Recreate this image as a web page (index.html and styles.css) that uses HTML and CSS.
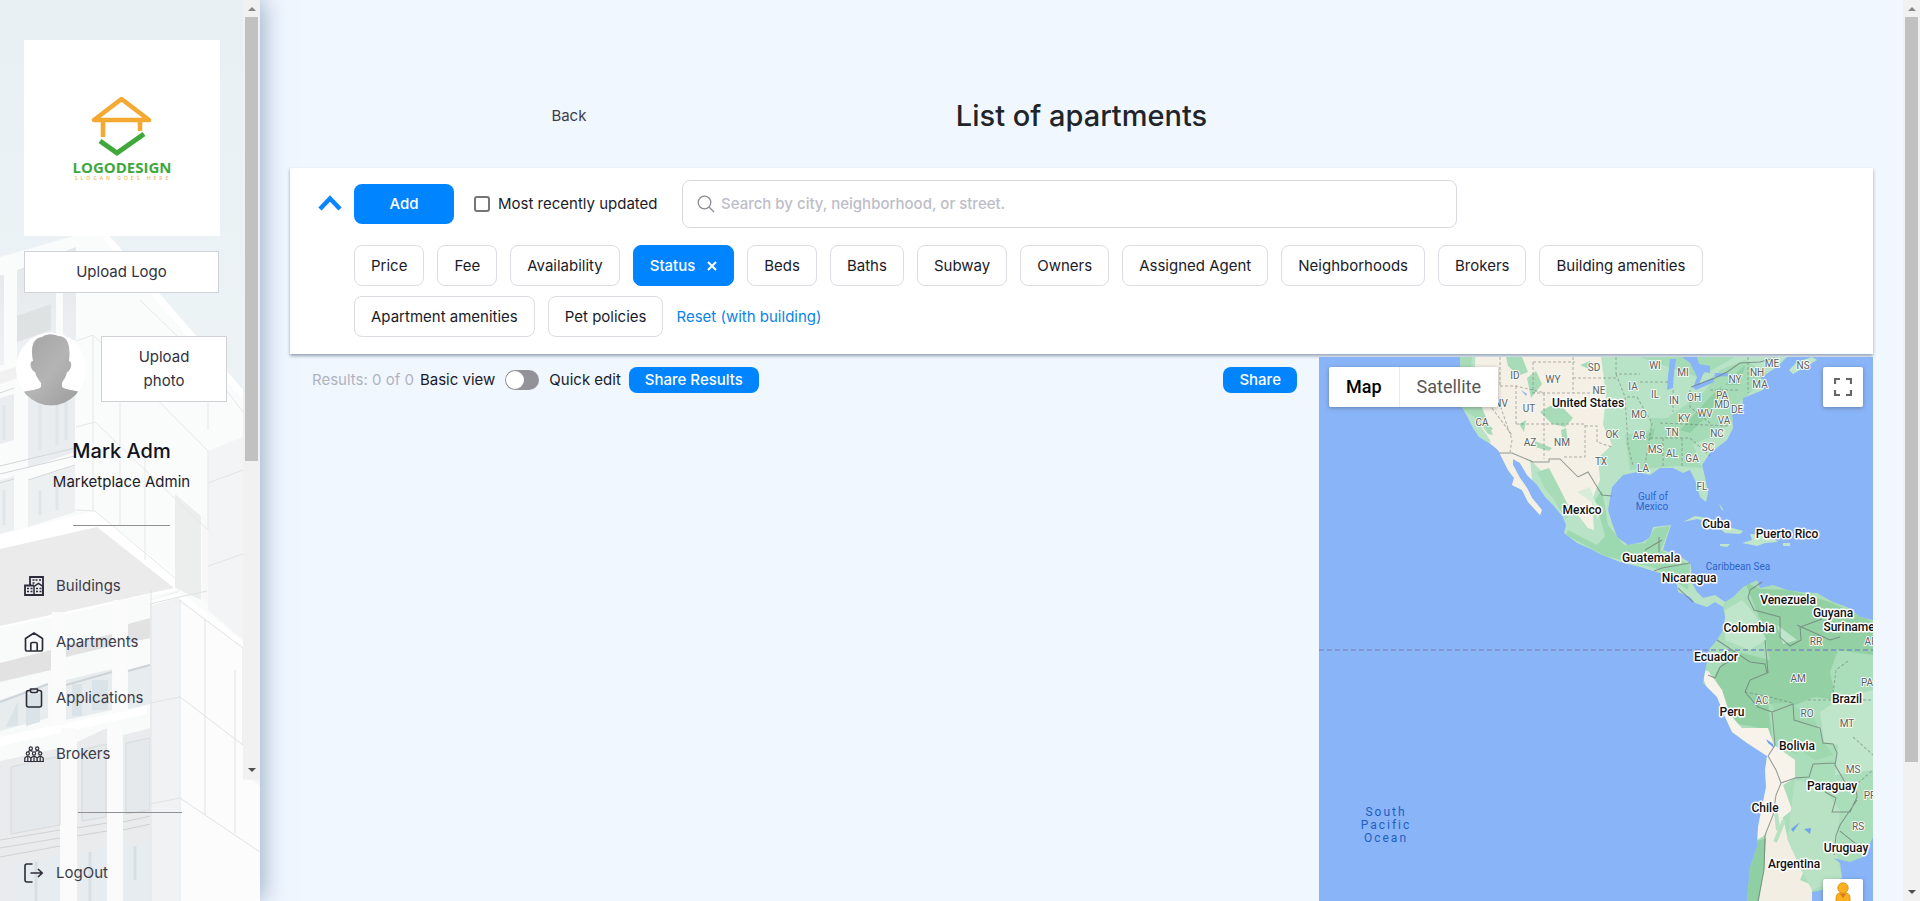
FILE: index.html
```html
<!DOCTYPE html>
<html lang="en">
<head>
<meta charset="utf-8">
<meta name="viewport" content="width=device-width, initial-scale=1">
<title>List of apartments</title>
<link rel="stylesheet" href="styles.css">
</head>
<body>
<div class="app">
  <aside class="sidebar">
    <svg class="sidebar-bg" viewBox="0 0 260 901" preserveAspectRatio="xMinYMin slice" aria-hidden="true">
      <defs>
        <linearGradient id="sky" x1="0" y1="0" x2="0" y2="1"><stop offset="0" stop-color="#e9f0f3"/><stop offset="1" stop-color="#f1f6f8"/></linearGradient>
        <linearGradient id="glass" x1="0" y1="0" x2="0" y2="1"><stop offset="0" stop-color="#e4e7e9"/><stop offset="1" stop-color="#eff3f5"/></linearGradient>
      </defs>
      <rect width="260" height="901" fill="url(#sky)"/>
      <path d="M0 257 74 236H105L243 395V901H0Z" fill="#fafbfb"/>
      <path d="M17 270 56 255V360L17 372ZM63 252 76 247V340H63ZM0 275H4V365H0Z" fill="url(#glass)"/>
      <path d="M17 316 51 304V330L17 342Z" fill="#dfe2e3"/>
      <path d="M0 372 76 347V358L0 384Z" fill="#f1f1f1"/>
      <path d="M0 398 14 394V440L0 444ZM28 384 75 367V452L28 468Z" fill="#e9edef"/>
      <path d="M0 480 14 476V530L0 534ZM28 480 75 466V512L28 527Z" fill="#edf0f1"/>
      <path d="M0 393 14 388M28 385 75 370M0 466 75 448M0 474 75 456M28 480 75 465M0 483 14 479" stroke="#d2d7d9" fill="none"/>
      <path d="M40 400V450M57 392V445M66 390V440M40 490V515M57 485V510M4 405V440M4 490V525" stroke="#dfe5e8" stroke-width="3"/>
      <path d="M0 535 95 511 175 575 179 590 0 628Z" fill="#fff"/>
      <path d="M0 549 97 527 174 588 0 626Z" fill="#ebebec"/>
      <path d="M175 494 201 516V600L175 588Z" fill="#eceded"/>
      <path d="M208 451 243 437V640L208 610Z" fill="#f3f4f5"/>
      <path d="M202 516 208 520V605L202 598Z" fill="#f8f8f9"/>
      <path d="M208 483 243 470M208 566 243 554" stroke="#e3e4e5"/>
      <path d="M76 341 93 335 208 451V530M76 427 95 422 208 530M76 510 95 511 175 578M93 335V510M120 360V525M140 300 208 366 243 412M208 366V430M145 450V560" fill="none" stroke="#e6e8e9"/>
      <path d="M105 236 243 395" stroke="#fff" stroke-width="7"/>
      <path d="M0 632 150 594V901H0Z" fill="#f9fafa"/>
      <path d="M0 663 51 650V670L0 682ZM66 645 112 634V646L66 657ZM128 624 150 618V638L128 643Z" fill="#e2e2e2"/>
      <path d="M0 700 48 684V718L0 731ZM66 680 112 669V710L66 720ZM128 670 150 664V704L128 709Z" fill="#e7ecee"/>
      <path d="M0 702 48 684M66 685 112 672M128 671 150 665" stroke="#cdd4d8" stroke-width="2"/>
      <path d="M6 727 18 701V725ZM26 694H40V722L26 726ZM72 684H82V716H72ZM92 680H108V710H92Z" fill="#d9e3e8"/>
      <path d="M0 737 147 706V714L0 746Z" fill="#fff"/>
      <path d="M0 761 60 748V901H0ZM77 742 107 728V901H77ZM123 735 151 728V901H123Z" fill="#eaebec"/>
      <path d="M11 767 60 756V825L11 834ZM82 750 106 744V817L82 821ZM126 743 150 738V810L126 814Z" fill="#e5e9eb" stroke="#d8dadb"/>
      <path d="M0 840 60 830M0 848 60 838M77 828 107 823M77 836 107 831M123 822 151 816M123 830 151 824M0 857 60 846" stroke="#cfd2d4"/>
      <path d="M14 865 60 856V901H14ZM80 852 107 847V901H80ZM124 845 151 840V901H124Z" fill="#e6ecef"/>
      <path d="M36 862V901M90 852V901M135 846V880" stroke="#d6dfe3" stroke-width="3"/>
      <path d="M61 728H76V901H61ZM108 722H122V901H108ZM52 612H65V725H52ZM113 600H127V712H113Z" fill="#fbfbfb"/>
      <path d="M150 600 179 590V901H150Z" fill="#f1f2f3"/>
      <path d="M179 590 243 640V780H253L260 786V901H179Z" fill="#fcfcfd"/>
      <path d="M150 603 179 595 243 645" fill="none" stroke="#fff" stroke-width="5"/>
      <path d="M150 604 179 597 207 591M179 600 243 648V745M150 703 180 697 243 745M150 804 180 798 260 852M205 620V815M235 670V833M180 600V901M151 590V901" fill="none" stroke="#e0e2e3"/>
    </svg>
    <div class="sidebar-scroll">
      <div class="sidebar-content">
        <div class="logo-card">
          <svg class="logo-mark" viewBox="0 0 110 90" aria-label="Logodesign, slogan goes here" role="img">
            <path d="M27 26 54.500 5 82 26ZM36 26V43M73 26V37" fill="none" stroke="#f3a932" stroke-width="4.600" stroke-linejoin="round"/>
            <path d="M33 47 50 59 77 40" fill="none" stroke="#40a83b" stroke-width="5"/>
            <text x="55" y="79" text-anchor="middle" class="logo-name">LOGODESIGN</text>
            <text x="56" y="86" text-anchor="middle" class="logo-slogan">SLOGAN GOES HERE</text>
          </svg>
        </div>
        <button class="upload upload-logo" type="button">Upload Logo</button>
        <div class="profile">
          <svg class="avatar" viewBox="0 0 70 74" role="img" aria-label="Profile photo">
            <defs><linearGradient id="grey" x1="0" y1="0" x2="1" y2="1"><stop offset="0" stop-color="#a2a2a2"/><stop offset=".5" stop-color="#b4b4b4"/><stop offset="1" stop-color="#9b9b9b"/></linearGradient>
            <clipPath id="round"><ellipse cx="35" cy="37" rx="35" ry="36.500"/></clipPath></defs>
            <ellipse cx="35" cy="37" rx="35" ry="36.500" fill="#fff"/>
            <path clip-path="url(#round)" d="M17 29C14 13 18 6 26 5 31 1 38 2 42 4 51 4 55 12 53 29 57 30 55 39 51 40 50 46 47 48 46 51V55C50 58 58 58 63 60L66 75H4L7 60C15 58 22 58 25 55V51C22 47 20 44 19 40 14 38 13 29 17 29Z" fill="url(#grey)"/>
          </svg>
          <button class="upload upload-photo" type="button">Upload photo</button>
        </div>
        <h2 class="user-name">Mark Adm</h2>
        <p class="user-role">Marketplace Admin</p>
        <hr class="rule">
        <nav class="nav" aria-label="Main">
          <a class="nav-link" href="#buildings">
            <svg viewBox="0 0 20 20" class="nav-icon" aria-hidden="true"><path d="M6 9V1H19V19H1V9.500H10" fill="none" stroke="currentColor" stroke-width="1.800"/><path d="M10 19V10.500L14.500 7.500 19 10.500V19Z" fill="none" stroke="currentColor" stroke-width="1.500"/><path d="M8.500 4H10.500M11.500 4H13.500M15 4H17M8.500 7H10.500M3 12.500H5M6.500 12.500H8.500M3 15.500H5M6.500 15.500H8.500M12 12.500H14M15.500 12.500H17.500M12 15.500H14M15.500 15.500H17.500" stroke="currentColor" stroke-width="1.500"/></svg>
            Buildings</a>
          <a class="nav-link" href="#apartments">
            <svg viewBox="0 0 20 20" class="nav-icon" aria-hidden="true"><path d="M1.500 6.500 10 1 18.500 6.500V17.500Q18.500 19 17 19H3Q1.500 19 1.500 17.500ZM6.800 19V12Q6.800 10.500 8.300 10.500H11.700Q13.200 10.500 13.200 12V19" fill="none" stroke="currentColor" stroke-width="1.700" stroke-linejoin="round"/></svg>
            Apartments</a>
          <a class="nav-link" href="#applications">
            <svg viewBox="0 0 20 20" class="nav-icon" aria-hidden="true"><path d="M6 2.500H4.500Q2.500 2.500 2.500 4.500V17Q2.500 19 4.500 19H15.500Q17.500 19 17.500 17V4.500Q17.500 2.500 15.500 2.500H14M6.500 1H13.500V3Q13.500 4.500 12 4.500H8Q6.500 4.500 6.500 3Z" fill="none" stroke="currentColor" stroke-width="1.600" stroke-linejoin="round"/></svg>
            Applications</a>
          <a class="nav-link" href="#brokers">
            <svg viewBox="0 0 20 20" class="nav-icon" aria-hidden="true"><g fill="none" stroke="currentColor" stroke-width="1.200"><circle cx="6.800" cy="4.500" r="1.600"/><circle cx="13.200" cy="4.500" r="1.600"/><circle cx="3.800" cy="9.500" r="1.600"/><circle cx="10" cy="9.500" r="1.600"/><circle cx="16.200" cy="9.500" r="1.600"/><path d="M4 7.500Q6.800 5.800 8.500 7.500M11.500 7.500Q13.200 5.800 16 7.500M.8 17.500V14Q3.800 10.500 6.800 14V17.500M7 17.500V14Q10 10.500 13 14V17.500M13.200 17.500V14Q16.200 10.500 19.200 14V17.500M3.800 12.500V17.500M10 12.500V17.500M16.200 12.500V17.500M0 17.500H20"/></g></svg>
            Brokers</a>
        </nav>
      </div>
      <div class="scrollbar" aria-hidden="true"><span class="arrow arrow-up"></span><span class="thumb thumb-side"></span><span class="arrow arrow-down"></span></div>
    </div>
    <div class="sidebar-footer">
      <hr class="rule rule-footer">
      <a class="nav-link" href="#logout">
        <svg viewBox="0 0 20 20" class="nav-icon" aria-hidden="true"><path d="M8.500 1H3Q1 1 1 3V17Q1 19 3 19H8.500M6.500 10H18M14 6 18.200 10 14 14" fill="none" stroke="currentColor" stroke-width="1.600"/></svg>
        LogOut</a>
    </div>
  </aside>

  <main class="main">
    <header class="page-header">
      <a class="back" href="#back">Back</a>
      <h1 class="title">List of apartments</h1>
    </header>

    <section class="filters" aria-label="Filters">
      <button class="collapse" type="button" aria-label="Collapse filters">
        <svg viewBox="0 0 24 16" aria-hidden="true"><path d="M2 14 12 3.500 22 14" fill="none" stroke="#0a84ff" stroke-width="4.500"/></svg>
      </button>
      <div class="filters-body">
        <div class="filters-top">
          <button class="primary add" type="button">Add</button>
          <label class="check"><input type="checkbox">Most recently updated</label>
          <label class="search">
            <svg viewBox="0 0 18 18" aria-hidden="true"><circle cx="7.500" cy="7.500" r="6.300" fill="none" stroke="#8b8b96" stroke-width="1.300"/><path d="M12 12 17 17" stroke="#8b8b96" stroke-width="1.300"/></svg>
            <input type="search" aria-label="Search apartments" placeholder="Search by city, neighborhood, or street.">
          </label>
        </div>
        <div class="chips">
          <button class="chip" type="button">Price</button>
          <button class="chip" type="button">Fee</button>
          <button class="chip" type="button">Availability</button>
          <button class="chip chip-active" type="button">Status <svg viewBox="0 0 10 10" aria-hidden="true"><path d="M1 1 9 9M9 1 1 9" stroke="#fff" stroke-width="2"/></svg></button>
          <button class="chip" type="button">Beds</button>
          <button class="chip" type="button">Baths</button>
          <button class="chip" type="button">Subway</button>
          <button class="chip" type="button">Owners</button>
          <button class="chip" type="button">Assigned Agent</button>
          <button class="chip" type="button">Neighborhoods</button>
          <button class="chip" type="button">Brokers</button>
          <button class="chip" type="button">Building amenities</button>
          <button class="chip" type="button">Apartment amenities</button>
          <button class="chip" type="button">Pet policies</button>
          <button class="reset" type="button">Reset (with building)</button>
        </div>
      </div>
    </section>

    <div class="results">
      <section class="list" aria-label="Results">
        <span class="count">Results: 0 of 0</span>
        <span class="view-label">Basic view</span>
        <input class="switch" id="quick" type="checkbox" role="switch">
        <label class="quick-label" for="quick">Quick edit</label>
        <button class="primary small" type="button">Share Results</button>
        <button class="primary small share" type="button">Share</button>
      </section>
      <section class="map" aria-label="Map">
        <svg class="map-canvas" viewBox="1319 357 554 544" preserveAspectRatio="xMaxYMin slice" role="img" aria-label="Map of the Americas">
          <defs>
            <clipPath id="land-n"><path d="M1460 357 1462 407 1468 418 1473 428 1479 437 1492 445 1498 450 1502 458 1508 470 1514 478 1512 485 1522 490 1528 502 1540 515 1542 510 1532 498 1527 488 1520 478 1513 465 1513 459 1520 463 1527 475 1537 485 1545 497 1553 505 1563 517 1566 525 1564 533 1577 543 1593 550 1600 554 1620 562 1640 567 1653 571 1667 575 1677 585 1678 592 1690 597 1695 603 1707 607 1715 602 1723 607 1725 602 1715 595 1703 598 1697 592 1692 583 1691 567 1690 563 1678 555 1663 550 1667 537 1671 525 1653 527 1650 537 1643 542 1628 545 1617 537 1612 523 1608 510 1612 487 1623 475 1637 472 1650 475 1660 468 1673 468 1683 473 1690 470 1695 480 1700 497 1706 502 1708 493 1705 477 1702 465 1710 453 1727 440 1733 428 1732 415 1742 408 1743 398 1763 390 1767 382 1760 378 1777 367 1783 361 1787 357Z"/></clipPath>
            <clipPath id="land-s"><path d="M1723 607 1725 617 1723 630 1717 640 1710 648 1708 655 1705 672 1703 683 1717 697 1725 717 1732 732 1747 743 1767 756 1765 770 1766 787 1762 807 1758 827 1757 847 1750 867 1747 901H1812V892L1822 890 1842 878 1840 863 1833 858 1850 862 1863 857 1873 837V620L1860 617 1847 607 1833 602 1817 593 1800 592 1787 590 1773 585 1760 588 1757 580 1743 587 1733 597 1725 602Z"/></clipPath>
          </defs>
          <rect x="1319" y="357" width="554" height="544" fill="#8ab4f8"/>
          <g clip-path="url(#land-n)">
            <rect x="1450" y="350" width="350" height="270" fill="#b9e3c6"/>
            <path d="M1476 350H1600L1606 395 1603 425 1612 445 1598 458 1600 480 1592 500 1594 530 1588 528 1570 505 1558 500 1545 475 1530 459 1532 480 1548 530H1500L1490 440 1480 425 1472 405Z" fill="#f5f0e6"/>
            <path d="M1473 350 1470 375 1478 398 1487 420 1493 435 1488 434 1478 420 1464 410 1455 370V350ZM1506 357H1522L1528 372 1518 376 1508 366ZM1527 378 1536 371 1542 384 1531 398ZM1540 412 1548 407 1558 403 1573 418 1565 427 1552 424ZM1535 441 1552 448 1549 451 1535 447ZM1561 430 1566 428 1568 441 1563 444ZM1537 472 1549 468 1560 489 1571 511 1566 520 1553 498 1545 489ZM1519 424 1526 420 1524 432ZM1487 423 1493 429 1488 432Z" fill="#a8dcb9"/>
            <path d="M1595 500 1602 490 1608 525 1624 545 1645 543 1655 528 1670 526 1661 550 1690 565 1688 590 1655 568 1605 556 1566 535 1568 530 1597 545 1605 536Z" fill="#9dd9b0"/>
            <path d="M1625 435 1650 430 1650 418 1667 418 1704 392 1720 370 1745 360 1770 375 1740 402 1732 422 1710 437 1693 444 1702 468 1675 466 1655 468 1630 470ZM1580 365 1590 361 1593 371ZM1640 357 1735 357 1712 370 1697 377Z" fill="#a5dbb6"/>
            <path d="M1680 430 1700 408 1712 395 1722 385 1716 402 1705 418 1690 433ZM1640 440 1655 428 1652 440ZM1725 385 1745 365 1740 385Z" fill="#90d0a4"/>
            <path d="M1591 498 1600 507 1598 520ZM1600 545 1612 552M1577 492 1590 487 1596 505" fill="#d7edda"/>
          </g>
          <g fill="#8ab4f8">
            <path d="M1670 359 1676 359 1674 372 1673 388 1667 390 1668 376ZM1682 357 1697 357 1699 364 1710 366 1710 373 1704 372 1699 384 1693 388 1697 377 1690 363ZM1692 387 1714 377 1714 382 1696 390ZM1715 373 1728 373 1728 376 1714 377ZM1521 390 1527 394 1526 396Z"/>
          </g>
          <g fill="#bfe6cb">
            <path d="M1789 370 1797 362 1812 357 1817 360 1800 370 1793 374ZM1683 522 1695 516 1707 518 1722 525 1743 531 1740 534 1725 533 1713 523 1697 519ZM1720 544 1730 544 1727 547 1720 546ZM1742 543 1752 540 1750 534 1770 535 1778 542 1765 543 1757 546ZM1783 543 1790 543 1790 546 1783 546ZM1719 503 1724 511 1721 509Z"/>
          </g>
          <g clip-path="url(#land-s)">
            <rect x="1700" y="575" width="175" height="330" fill="#aaddb9"/>
            <path d="M1745 582 1760 589 1790 590 1830 602 1873 622V655L1838 650 1830 672 1836 700 1815 697 1785 709 1768 703 1772 738 1756 727 1738 724 1722 700 1715 675 1730 650 1770 660 1762 625Z" fill="#93d1a5"/>
            <path d="M1725 610 1742 600 1755 615 1766 640 1750 650 1725 640ZM1777 625 1797 640 1783 644ZM1838 700 1873 690V770L1835 775 1838 745 1824 742 1820 712Z" fill="#bfe6cb"/>
            <path d="M1773 703H1790L1815 720 1822 740 1833 755 1815 760 1800 750 1796 755 1775 740Z" fill="#9fd7af"/>
            <path d="M1700 670 1708 671 1722 690 1730 715 1742 728 1768 728 1774 745 1795 760 1795 778 1783 785 1792 810 1782 818 1765 835 1757 840 1757 760 1722 728Z" fill="#f7f2ea"/>
            <path d="M1775 815 1783 818 1788 840 1800 854 1805 868 1800 880 1812 885V905H1758L1765 860 1763 842Z" fill="#f2eee3"/>
            <path d="M1795 780 1820 785 1840 810 1836 850 1842 878 1812 890 1800 868 1788 840 1790 815Z" fill="#b9e2c4"/>
            <path d="M1754 842 1766 838 1764 870 1758 905H1742Z" fill="#8fcfa3"/>
            <path d="M1776 813 1778 830M1784 820 1775 842M1789 838 1794 850M1800 865 1810 875" stroke="#b9e2c4" stroke-width="4"/>
          </g>
          <path d="M1766 739 1773 744 1774 748 1768 743ZM1791 829 1800 822 1793 832ZM1804 829 1811 828 1810 834Z" fill="#6fa3ee"/>
          <g fill="none" stroke="#6f7a76" stroke-width="1" opacity=".75">
            <path d="M1499 453 1512 453 1533 462H1549V459H1560L1578 477 1588 472 1602 495 1612 496M1645 550 1662 540M1659 537V552M1654 571 1662 568 1690 563M1678 588 1693 602M1762 582 1750 590 1748 598 1754 610 1780 617 1780 637 1790 646 1801 640 1800 627 1822 619M1797 625 1830 640 1840 637M1717 640 1735 652 1750 662 1765 664 1767 673 1750 680 1745 692 1758 707 1772 712 1793 704 1794 720 1820 728 1823 743 1833 744 1837 753 1835 765 1846 784 1855 782 1857 797 1850 812 1832 812 1836 798 1825 792M1708 675 1715 678 1720 667 1735 657M1765 640 1768 673M1772 712 1775 745 1768 756 1776 770 1781 783 1795 778 1809 777 1813 764 1835 763M1781 783 1776 795 1773 815 1765 835 1764 870 1758 901M1857 800 1840 825 1836 835 1834 855M1840 831 1861 848M1691 387 1715 378 1727 372 1740 363 1760 362 1775 358"/>
          </g>
          <g fill="none" stroke="#6f7a76" stroke-width="1" stroke-dasharray="3 2" opacity=".55">
            <path d="M1500 357V386M1516 386V424M1500 386H1516L1545 393M1533 362V393H1600M1533 362H1575M1573 357V393H1597M1573 378H1616M1544 393V459M1516 424H1585V457H1562M1499 402 1512 440 1510 452M1480 392 1512 435M1585 426H1597V442L1612 447M1616 357V374H1640M1616 374 1625 397 1628 445 1633 466M1627 397H1637L1652 423 1645 465M1640 382H1668M1673 390V412M1660 423 1730 426M1650 438H1690L1710 456M1663 438V466M1682 438V466M1690 390V407L1710 423M1710 390H1740M1748 357V393M1745 692 1770 697 1793 703M1833 693 1836 670 1848 661M1808 700H1873M1853 737 1873 755M1858 783 1873 770"/>
          </g>
          <path d="M1319 650H1873" stroke="#7f8dc4" stroke-width="1.500" stroke-dasharray="5 3"/>
          <g class="state">
            <text x="1515" y="379">ID</text><text x="1553" y="383">WY</text><text x="1594" y="371">SD</text><text x="1599" y="394">NE</text><text x="1501" y="407">NV</text><text x="1529" y="412">UT</text><text x="1482" y="426">CA</text><text x="1530" y="446">AZ</text><text x="1562" y="446">NM</text><text x="1601" y="465">TX</text><text x="1612" y="438">OK</text><text x="1655" y="369">WI</text><text x="1683" y="376">MI</text><text x="1633" y="390">IA</text><text x="1655" y="398">IL</text><text x="1674" y="404">IN</text><text x="1694" y="401">OH</text><text x="1735" y="383">NY</text><text x="1772" y="367">ME</text><text x="1757" y="376">NH</text><text x="1760" y="388">MA</text><text x="1803" y="369">NS</text><text x="1722" y="399">PA</text><text x="1722" y="408">MD</text><text x="1737" y="413">DE</text><text x="1639" y="418">MO</text><text x="1684" y="422">KY</text><text x="1705" y="417">WV</text><text x="1724" y="424">VA</text><text x="1639" y="439">AR</text><text x="1672" y="436">TN</text><text x="1717" y="437">NC</text><text x="1655" y="453">MS</text><text x="1672" y="457">AL</text><text x="1692" y="462">GA</text><text x="1708" y="451">SC</text><text x="1643" y="472">LA</text><text x="1702" y="490">FL</text><text x="1816" y="645">RR</text><text x="1871" y="645">AP</text><text x="1798" y="682">AM</text><text x="1867" y="686">PA</text><text x="1762" y="704">AC</text><text x="1807" y="717">RO</text><text x="1847" y="727">MT</text><text x="1853" y="773">MS</text><text x="1870" y="799">PR</text><text x="1858" y="830">RS</text>
          </g>
          <g class="water">
            <text x="1653" y="500">Gulf of</text><text x="1652" y="510">Mexico</text><text x="1738" y="570">Caribbean Sea</text>
          </g>
          <g class="ocean"><text x="1386" y="816">South</text><text x="1386" y="829">Pacific</text><text x="1386" y="842">Ocean</text></g>
          <g class="country">
            <text x="1588" y="407">United States</text><text x="1582" y="514">Mexico</text><text x="1716" y="528">Cuba</text><text x="1787" y="538">Puerto Rico</text><text x="1651" y="562">Guatemala</text><text x="1689" y="582">Nicaragua</text><text x="1788" y="604">Venezuela</text><text x="1833" y="617">Guyana</text><text x="1849" y="631">Suriname</text><text x="1749" y="632">Colombia</text><text x="1716" y="661">Ecuador</text><text x="1847" y="703">Brazil</text><text x="1732" y="716">Peru</text><text x="1797" y="750">Bolivia</text><text x="1832" y="790">Paraguay</text><text x="1765" y="812">Chile</text><text x="1846" y="852">Uruguay</text><text x="1794" y="868">Argentina</text>
          </g>
        </svg>
        <div class="map-types"><button type="button" class="map-type map-type-on">Map</button><button type="button" class="map-type">Satellite</button></div>
        <button class="map-button fullscreen" type="button" aria-label="Toggle fullscreen view"><svg viewBox="0 0 18 18" aria-hidden="true"><path d="M1 6V1H6M12 1H17V6M17 12V17H12M6 17H1V12" fill="none" stroke="#666" stroke-width="2.200"/></svg></button>
        <button class="map-button pegman" type="button" aria-label="Street View"><svg viewBox="0 0 16 34" aria-hidden="true"><path d="M4 11H12Q15 12 15 16V22H13L12 33H4L3 22H1V16Q1 12 4 11Z" fill="#fbb01d" stroke="#d58a12" stroke-width=".8"/><path d="M5 12 8 16 11 12Z" fill="#d9781c"/><circle cx="8" cy="6" r="5.200" fill="#fbb01d" stroke="#d58a12" stroke-width=".8"/></svg></button>
      </section>
    </div>
  </main>
  <div class="scrollbar" aria-hidden="true"><span class="arrow arrow-up"></span><span class="thumb thumb-page"></span><span class="arrow arrow-down"></span></div>
</div>
</body>
</html>
```
FILE: styles.css
```css
*{box-sizing:border-box}
body{margin:0;background:#f0f7ff;color:#1b1b28;font-family:Inter,"Open Sans",sans-serif;font-size:15px;line-height:24px}
button,input{font:inherit;color:inherit}
button{cursor:pointer}
h1,h2,p{margin:0;font-weight:400}
a{color:inherit;text-decoration:none}

.app{display:flex;height:100vh;overflow:hidden}

/* Sidebar */
.sidebar{position:relative;z-index:1;display:flex;flex-direction:column;flex:0 0 260px;box-shadow:2px 0 24px rgba(60,90,130,.5)}
.sidebar-bg{position:absolute;inset:0;width:100%;height:100%}
.sidebar-scroll{position:relative;display:flex;flex:1;min-height:0;overflow:hidden}
.sidebar-content{display:flex;flex-direction:column;flex:1;padding-top:40px;color:#32323f}
.logo-card{display:flex;justify-content:center;width:196px;height:196px;margin-left:24px;padding-top:54px;background:#fff}
.logo-mark{width:110px;height:90px;overflow:visible}
.logo-name{font:700 15px "Open Sans",sans-serif;fill:#40a83b}
.logo-slogan{font:600 5px "Open Sans",sans-serif;fill:#f0b75a;letter-spacing:3px}
.upload{background:#fff;border:1px solid #cfd3d8;color:#32323f}
.upload-logo{width:195px;height:42px;margin:15px 0 0 24px}
.profile{display:flex;align-items:center;gap:15px;margin-top:39px;padding-left:16px}
.avatar{width:70px;height:74px}
.upload-photo{width:126px;height:66px;padding:0 32px}
.user-name{margin-top:30px;color:#12121c;font-size:20px;font-weight:500;line-height:30px;text-align:center}
.user-role{margin-top:4px;color:#1b1b28;text-align:center}
.rule{width:97px;height:1px;margin:31px auto 0;border:0;background:#8f9194}
.nav{display:flex;flex-direction:column;gap:32px;margin-top:48px}
.nav-link{position:relative;display:flex;align-items:center;gap:12px;padding-left:24px;color:#3c3c49}
.nav-icon{width:20px;height:20px;color:#2c2c3a}
.sidebar-footer{position:relative;flex:0 0 122px}
.rule-footer{width:104px;margin:33px 0 48px 78px}

/* Drawn scrollbars */
.scrollbar{display:flex;flex-direction:column;align-items:center;justify-content:space-between;flex:0 0 17px;padding:7px 0;background:#f1f1f1}
.arrow{border:4px solid transparent}
.arrow-up{border-top:0;border-bottom-color:#868686}
.arrow-down{border-bottom:0;border-top-color:#505050}
.thumb{width:13px;margin:6px 0 auto;background:#c1c1c1}
.thumb-side{height:58%}
.thumb-page{height:84%}

/* Main column */
.main{display:flex;flex-direction:column;flex:1;min-width:0;padding:0 30px}
.page-header{display:grid;grid-template-columns:1fr auto 1fr;align-items:center;padding:96px 0 33px}
.back{justify-self:center;margin-right:108px;color:#3c3c49}
.title{color:#212529;font-size:29px;font-weight:500;line-height:39px}

.filters{position:relative;display:flex;align-items:flex-start;gap:12px;padding:12px 29px 17px 28px;background:#fff;box-shadow:0 2px 3px rgba(60,80,110,.5)}
.collapse{width:24px;height:16px;margin-top:15px;padding:0;border:0;background:none}
.collapse svg{display:block;width:24px;height:16px}
.filters-body{flex:1}
.filters-top{display:flex;align-items:center}
.primary{border:0;border-radius:8px;background:#0084ff;color:#fff;font-weight:500}
.add{width:100px;height:40px}
.check{display:flex;align-items:center;gap:8px;width:208px;margin-left:20px}
.check input{width:16px;height:16px;margin:0;appearance:none;border:2px solid #76767a;border-radius:3px;background:#fff}
.check input:checked{background:#0084ff}
.search{display:flex;align-items:center;gap:6px;width:52%;height:48px;padding:0 14px;border:1px solid #d9d9e0;border-radius:8px}
.search svg{width:18px;height:18px}
.search input{flex:1;min-width:0;padding:0;border:0;outline:0;background:none;font-weight:500}
.search input::placeholder{color:#bdbdc7;opacity:1}
.chips{display:flex;flex-wrap:wrap;gap:10px 13px;margin-top:17px}
.chip{display:flex;align-items:center;gap:12px;height:41px;padding:0 16px;border:1px solid #dcdce3;border-radius:8px;background:#fff}
.chip-active{border-color:#0084ff;background:#0084ff;color:#fff;font-weight:500}
.chip-active svg{width:10px;height:10px}
.reset{padding:0;border:0;background:none;color:#0a84e8}

.results{display:flex;flex:1;min-height:0;padding-top:3px}
.list{display:flex;align-items:center;align-self:flex-start;flex:1;padding:10px 22px 0}
.count{color:#b0b3bf}
.view-label{margin-left:6px}
.switch{position:relative;width:34px;height:20px;margin:0 10px;appearance:none;border-radius:10px;background:#929298}
.switch::before{content:"";position:absolute;top:1px;left:1px;width:18px;height:18px;border-radius:50%;background:#fff}
.switch:checked::before{left:15px}
.quick-label{margin-right:8px}
.small{height:26px;padding:0 16px;line-height:26px}
.share{margin-left:auto}

/* Map */
.map{position:relative;flex:0 0 35%;overflow:hidden;font-family:Roboto,sans-serif}
.map-canvas{display:block;width:100%;height:100%}
.map text{text-anchor:middle;paint-order:stroke;stroke-linejoin:round}
.country{font:500 12px Roboto,sans-serif;fill:#111;stroke:#fff;stroke-width:3px}
.state{font:400 10px Roboto,sans-serif;fill:#5c6166;stroke:#f4faf4;stroke-width:2px}
.water{font:400 10px Roboto,sans-serif;fill:#2b66c9}
.ocean{font:400 12px Roboto,sans-serif;fill:#1f5fc0;letter-spacing:2px}
.map-types{position:absolute;top:10px;left:10px;display:flex;box-shadow:0 1px 4px rgba(0,0,0,.3);border-radius:2px;overflow:hidden}
.map-type{height:40px;padding:0 17px;border:0;border-left:1px solid #ebebeb;background:#fff;color:#565656;font-size:18px}
.map-type-on{border-left:0;color:#000;font-weight:500}
.map-button{position:absolute;right:10px;display:grid;place-items:center;width:40px;height:40px;padding:0;border:0;border-radius:2px;background:#fff;box-shadow:0 1px 4px rgba(0,0,0,.3)}
.fullscreen{top:10px}
.fullscreen svg{width:18px;height:18px}
.pegman{bottom:-18px}
.pegman svg{width:16px;height:34px}
```
